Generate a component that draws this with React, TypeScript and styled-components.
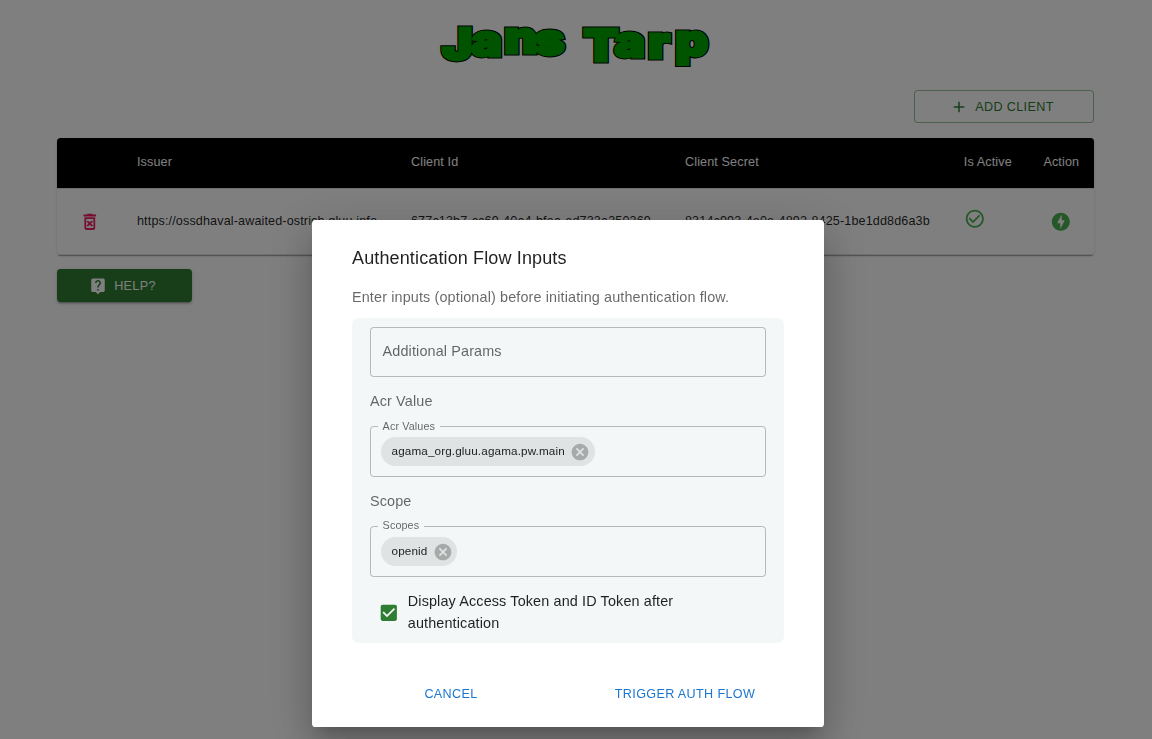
import React from "react";
import styled, { createGlobalStyle } from "styled-components";
import {
  MdAdd,
  MdCancel,
  MdCheckBox,
  MdCheckCircleOutline,
  MdLiveHelp,
  MdOfflineBolt,
  MdOutlineDeleteForever,
} from "react-icons/md";

const GlobalStyle = createGlobalStyle`
  *, *::before, *::after { box-sizing: border-box; }
  body {
    margin: 0;
    overflow: hidden;
    background: #fff;
    color: rgba(0, 0, 0, 0.87);
    font-family: "Liberation Sans", Arial, sans-serif;
    font-size: 14.4px;
  }
  svg { display: block; flex: none; }
`;

const Page = styled.main`
  height: 739px;
  padding: 4px 58px 0 57px;
  display: flex;
  flex-direction: column;
`;

const Logo = styled.svg`
  width: 290px;
  height: 70px;
  align-self: center;
  overflow: visible;
  font-family: Inter, sans-serif;
  font-weight: 900;
  font-size: 44px;
  stroke-linejoin: miter;
  stroke-miterlimit: 3;
`;

const LogoLayer = styled.g<{ $color: string; $stroke: number }>`
  fill: ${(p) => p.$color};
  stroke: ${(p) => p.$color};
  stroke-width: ${(p) => p.$stroke}px;
`;

const Button = styled.button<{ $variant: "outlined" | "contained" | "text"; $width: number }>`
  width: ${(p) => p.$width}px;
  height: 33px;
  padding: 0 ${(p) => (p.$variant === "text" ? 0 : 4)}px 0 0;
  display: flex;
  align-items: center;
  justify-content: center;
  gap: 7px;
  font: inherit;
  font-size: 12.6px;
  line-height: 22px;
  letter-spacing: 0.36px;
  text-transform: uppercase;
  border-radius: 3.6px;
  color: ${(p) => ({ outlined: "#2e7d32", contained: "#fff", text: "#1976d2" })[p.$variant]};
  background: ${(p) => (p.$variant === "contained" ? "#2e7d32" : "transparent")};
  border: ${(p) => (p.$variant === "outlined" ? "1px solid rgba(46, 125, 50, 0.5)" : "0")};
  box-shadow: ${(p) =>
    p.$variant === "contained"
      ? "0 3px 1px -2px rgba(0,0,0,.2), 0 2px 2px 0 rgba(0,0,0,.14), 0 1px 5px 0 rgba(0,0,0,.12)"
      : "none"};
`;

const AddRow = styled.div`
  display: flex;
  justify-content: flex-end;
  margin: 16px 0 15px;
`;

const Table = styled.section`
  height: 117px;
  margin-bottom: 14px;
  border-radius: 3.6px;
  box-shadow: 0 2px 1px -1px rgba(0, 0, 0, 0.2), 0 1px 1px 0 rgba(0, 0, 0, 0.14),
    0 1px 3px 0 rgba(0, 0, 0, 0.12);
`;

const Row = styled.div<{ $head?: boolean }>`
  display: grid;
  grid-template-columns: 65.6px 274px 274px 278.8px 79.6px 1fr;
  align-items: center;
  height: ${(p) => (p.$head ? 51 : 66)}px;
  padding-bottom: ${(p) => (p.$head ? 3 : 2)}px;
  font-size: 12.6px;
  letter-spacing: 0.13px;
  white-space: nowrap;
  color: ${(p) => (p.$head ? "#fff" : "inherit")};
  background: ${(p) => (p.$head ? "#000" : "transparent")};
  background-clip: padding-box;
  border-radius: ${(p) => (p.$head ? "3.6px 3.6px 0 0" : "0")};
  border-bottom: 1px solid #e0e0e0;
`;

const Cell = styled.div<{ $align?: string; $lift?: number; $drop?: number; $shift?: number }>`
  display: flex;
  justify-content: ${(p) => p.$align ?? "flex-start"};
  padding: ${(p) => p.$drop ?? 0}px ${(p) => 14.4 + (p.$shift ?? 0)}px ${(p) => p.$lift ?? 0}px 14.4px;
`;

const Backdrop = styled.div`
  position: fixed;
  inset: 0;
  background: rgba(0, 0, 0, 0.5);
`;

const Dialog = styled.section`
  position: fixed;
  left: 312px;
  top: 220px;
  width: 512px;
  height: 507px;
  padding: 24px 40px 0;
  display: flex;
  flex-direction: column;
  background: #fff;
  border-radius: 3.6px;
  box-shadow: 0 11px 15px -7px rgba(0, 0, 0, 0.2), 0 24px 38px 3px rgba(0, 0, 0, 0.14),
    0 9px 46px 8px rgba(0, 0, 0, 0.12);
`;

const Title = styled.h2`
  margin: 0 0 14px;
  font-size: 18px;
  line-height: 28px;
  font-weight: 500;
  letter-spacing: 0.135px;
`;

const Muted = styled.p`
  margin: 0;
  line-height: 22px;
  letter-spacing: 0.135px;
  color: rgba(0, 0, 0, 0.6);
`;

const Panel = styled.div`
  margin-top: 10px;
  height: 325px;
  padding: 9px 18px 0;
  display: flex;
  flex-direction: column;
  background: #f3f7f8;
  border-radius: 7px;
`;

const Field = styled.fieldset<{ $legend?: boolean }>`
  margin: 0;
  min-width: 0;
  height: ${(p) => (p.$legend ? 57 : 50)}px;
  padding: ${(p) => (p.$legend ? "5px 10px 0" : "12px 11.6px 0")};
  border: 1px solid rgba(0, 0, 0, 0.25);
  border-radius: 3.6px;
`;

const Legend = styled.legend<{ $raise: number }>`
  margin-left: -3px;
  padding: 0 4.6px;
  height: 12px;
  font-size: 10.8px;
  line-height: ${(p) => 12 - 2 * p.$raise}px;
  letter-spacing: 0.1px;
  color: rgba(0, 0, 0, 0.6);
`;

const FieldLabel = styled(Muted)`
  margin: 13px 0 8px;
`;

const Chip = styled.span`
  display: inline-flex;
  align-items: center;
  height: 29px;
  padding: 0 4.5px 0 10.5px;
  gap: 5.4px;
  border-radius: 15px;
  background: #e0e3e3;
  font-size: 11.7px;
  letter-spacing: 0.135px;
  svg { color: #a8aaaa; }
`;

const ChipText = styled.span`
  padding-bottom: 2px;
`;

const CheckRow = styled.label`
  display: flex;
  align-items: center;
  gap: 8.2px;
  margin-top: 13px;
  padding-left: 8px;
  line-height: 22px;
  letter-spacing: 0.135px;
  svg { color: #2e7d32; margin-top: 2px; }
`;

const Actions = styled.div`
  display: flex;
  margin: 34px -4px 0;
  justify-content: space-between;
`;

interface ChipFieldProps {
  heading: string;
  legend: string;
  value: string;
  raise?: number;
}

function ChipField({ heading, legend, value, raise = 0 }: ChipFieldProps) {
  return (
    <>
      <FieldLabel>{heading}</FieldLabel>
      <Field $legend>
        <Legend $raise={raise}>{legend}</Legend>
        <Chip>
          <ChipText>{value}</ChipText>
          <MdCancel size={20} />
        </Chip>
      </Field>
    </>
  );
}

export default function App() {
  return (
    <>
      <GlobalStyle />
      <Page>
        <Logo viewBox="0 -14 290 70">
          <LogoLayer $color="#000" $stroke={4.8}>
            <text id="wordmark" transform="scale(1.16 1)" x="9.5 35 63.2 89.5 116 131.5 158.2 187 210.5" y="41.5 38 34.5 37 37 43 38.5 40 37.5">
              Jans Tarp
            </text>
          </LogoLayer>
          <LogoLayer $color="#00a800" $stroke={2.8}><use href="#wordmark" /></LogoLayer>
        </Logo>
        <AddRow>
          <Button $variant="outlined" $width={180}>
            <MdAdd size={18} />
            Add Client
          </Button>
        </AddRow>
        <Table>
          <Row $head>
            <Cell />
            <Cell>Issuer</Cell>
            <Cell>Client Id</Cell>
            <Cell>Client Secret</Cell>
            <Cell>Is Active</Cell>
            <Cell>Action</Cell>
          </Row>
          <Row>
            <Cell $align="center" $drop={2}><MdOutlineDeleteForever size={21.6} color="#e91e63" /></Cell>
            <Cell>https://ossdhaval-awaited-ostrich.gluu.info</Cell>
            <Cell>677c13b7-cc69-40a4-bfea-ed733a350369</Cell>
            <Cell>8314c993-4e0e-4892-8425-1be1dd8d6a3b</Cell>
            <Cell $lift={4}><MdCheckCircleOutline size={21.6} color="#4caf50" /></Cell>
            <Cell $align="center" $drop={2} $shift={1}><MdOfflineBolt size={21.6} color="#4caf50" /></Cell>
          </Row>
        </Table>
        <Button $variant="contained" $width={135}>
          <MdLiveHelp size={18} />
          Help?
        </Button>
      </Page>
      <Backdrop />
      <Dialog>
        <Title>Authentication Flow Inputs</Title>
        <Muted>Enter inputs (optional) before initiating authentication flow.</Muted>
        <Panel>
          <Field><Muted>Additional Params</Muted></Field>
          <ChipField heading="Acr Value" legend="Acr Values" value="agama_org.gluu.agama.pw.main" />
          <ChipField heading="Scope" legend="Scopes" value="openid" raise={1} />
          <CheckRow>
            <MdCheckBox size={21.6} />
            <span>Display Access Token and ID Token after authentication</span>
          </CheckRow>
        </Panel>
        <Actions>
          <Button $variant="text" $width={206}>Cancel</Button>
          <Button $variant="text" $width={206}>Trigger Auth Flow</Button>
        </Actions>
      </Dialog>
    </>
  );
}
